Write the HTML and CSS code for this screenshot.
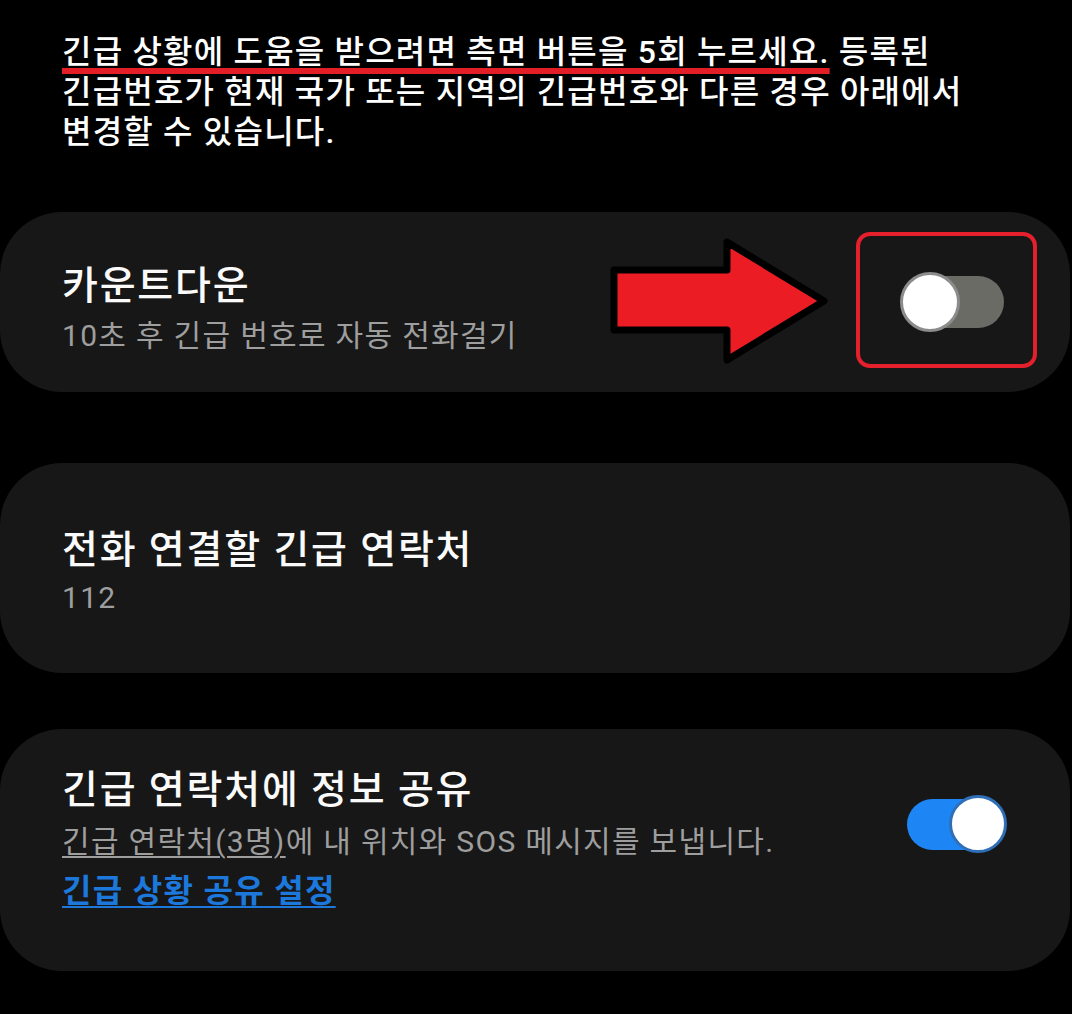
FILE: index.html
```html
<!DOCTYPE html>
<html lang="ko">
<head>
<meta charset="utf-8">
<title>긴급 SOS</title>
<link rel="stylesheet" href="styles.css">
</head>
<body>
<p class="intro"><span class="mark">긴급 상황에 도움을 받으려면 측면 버튼을 5회 누르세요.</span> 등록된<br>긴급번호가 현재 국가 또는 지역의 긴급번호와 다른 경우 아래에서<br>변경할 수 있습니다.</p>

<section class="card card-countdown">
  <div class="texts">
    <div class="title">카운트다운</div>
    <div class="sub">10초 후 긴급 번호로 자동 전화걸기</div>
  </div>
  <div class="switch switch-off">
    <span class="track"></span>
    <span class="thumb"></span>
  </div>
  <svg class="arrow" viewBox="0 0 240 140" width="240" height="140" aria-hidden="true">
    <polygon points="14,38 127,38 127,10 224,69 127,128 127,98 14,98" fill="#ec1c24" stroke="#000" stroke-width="7" stroke-linejoin="round"/>
  </svg>
  <div class="focus-box"></div>
</section>

<section class="card card-number">
  <div class="texts">
    <div class="title">전화 연결할 긴급 연락처</div>
    <div class="sub">112</div>
  </div>
</section>

<section class="card card-share">
  <div class="row">
    <div class="texts">
      <div class="title">긴급 연락처에 정보 공유</div>
      <div class="sub"><span class="contacts">긴급 연락처(3명)</span>에 내 위치와 SOS 메시지를 보냅니다.</div>
    </div>
    <div class="switch switch-on">
      <span class="track"></span>
      <span class="thumb"></span>
    </div>
  </div>
  <a class="link" href="#">긴급 상황 공유 설정</a>
</section>
</body>
</html>
```

FILE: styles.css
```css
html, body {
  margin: 0;
  background: #000;
}

body {
  width: 1072px;
  height: 1014px;
  overflow: hidden;
  font-family: Roboto, "Noto Sans CJK KR", sans-serif;
  color: #fafafa;
}

/* intro paragraph */
.intro {
  margin: 0;
  padding: 32px 0 0 62px;
  font-size: 32px;
  line-height: 40px;
  letter-spacing: 1.2px;
  font-weight: 500;
  color: #fff;
}

.mark {
  text-decoration: underline;
  text-decoration-color: #e31e26;
  text-decoration-thickness: 6px;
  text-underline-offset: 5px;
  text-decoration-skip-ink: none;
}

/* setting cards */
.card {
  position: relative;
  width: 1070px;
  box-sizing: border-box;
  background: #171717;
  border-radius: 62px;
  padding-left: 62px;
}

.title {
  font-size: 39px;
  line-height: 48px;
  letter-spacing: 1.8px;
  font-weight: 500;
  color: #fafafa;
}

.sub {
  font-size: 30px;
  line-height: 40px;
  letter-spacing: 1.3px;
  color: #9e9e9e;
}

.card-countdown {
  margin-top: 60px;
  height: 180px;
  padding: 50px 66px 36px 62px;
  display: flex;
  align-items: center;
  justify-content: space-between;
}

.card-countdown .sub {
  margin-top: 6px;
}

.card-countdown .switch {
  margin-bottom: 14px;
}

.card-number {
  margin-top: 71px;
  height: 210px;
  padding-top: 63px;
}

.card-number .sub {
  margin-top: 4px;
}

.card-share {
  margin-top: 56px;
  height: 242px;
  padding: 37px 63px 0 62px;
}

.card-share .row {
  display: flex;
  align-items: center;
  justify-content: space-between;
}

.card-share .sub {
  margin-top: 8px;
}

.card-share .switch {
  margin-top: 20px;
}

.contacts {
  text-decoration: underline;
  text-decoration-thickness: 2px;
  text-underline-offset: 4px;
  text-decoration-color: #9e9e9e;
}

.link {
  display: block;
  margin-top: 9px;
  font-size: 32px;
  line-height: 40px;
  letter-spacing: 1.3px;
  font-weight: 700;
  color: #1d78dc;
  text-decoration: underline;
  text-decoration-thickness: 2px;
  text-underline-offset: 4px;
}

/* toggle switches */
.switch {
  position: relative;
  flex: none;
}

.switch .track {
  position: absolute;
  border-radius: 30px;
}

.switch .thumb {
  position: absolute;
  top: 0;
  border-radius: 50%;
  background: #fff;
  box-sizing: border-box;
}

.switch-off {
  width: 104px;
  height: 60px;
}

.switch-off .track {
  left: 2px;
  right: 0;
  top: 4px;
  bottom: 4px;
  background: #6b6b66;
}

.switch-off .thumb {
  left: 0;
  width: 60px;
  height: 60px;
  border: 3px solid #8c8c8c;
}

.switch-on {
  width: 100px;
  height: 58px;
}

.switch-on .track {
  left: 0;
  right: 6px;
  top: 4px;
  bottom: 3px;
  background: #1e86f4;
}

.switch-on .thumb {
  right: 0;
  width: 58px;
  height: 58px;
  border: 3px solid #2f6fb8;
}

/* annotation overlays on the countdown card */
.arrow {
  position: absolute;
  left: 600px;
  top: 20px;
}

.focus-box {
  position: absolute;
  left: 856px;
  top: 20px;
  width: 181px;
  height: 136px;
  box-sizing: border-box;
  border: 4px solid #e3202b;
  border-radius: 14px;
}
```
